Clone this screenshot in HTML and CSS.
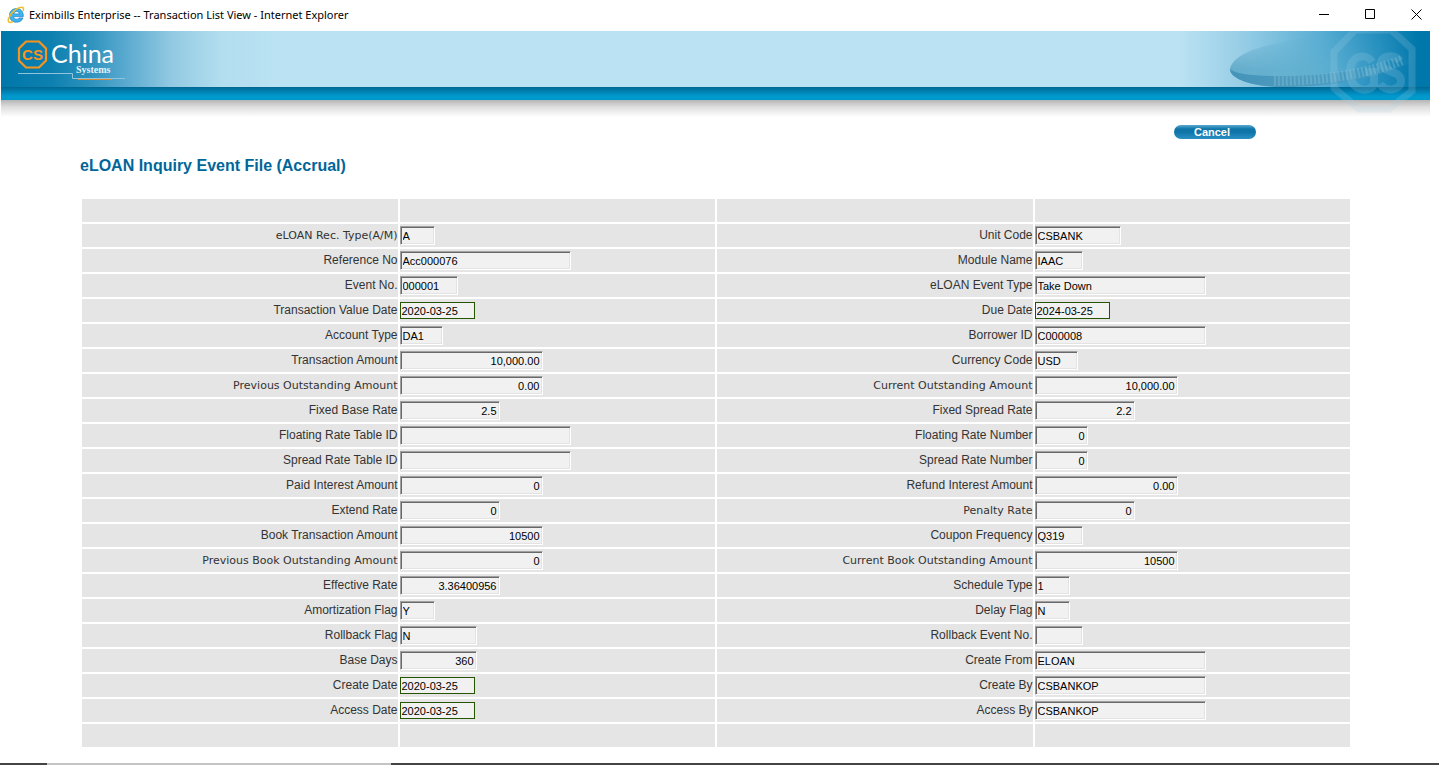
FILE: index.html
```html
<!DOCTYPE html>
<html lang="en">
<head>
<meta charset="utf-8">
<title>Eximbills Enterprise -- Transaction List View</title>
<link rel="stylesheet" href="styles.css">
</head>
<body>
<header class="titlebar">
  <svg class="ie" viewBox="0 0 18 18" aria-hidden="true">
    <path d="M16.300 10.600H6.600c.2 1.700 1.300 2.600 3 2.600 1.200 0 2.100-.5 2.600-1.300h3.800c-.8 2.600-3.400 4.300-6.500 4.300-4.200 0-7-2.800-7-6.800s2.800-6.800 7-6.800 7.100 3 6.800 8zM6.700 7.900h5.600c-.2-1.500-1.200-2.400-2.700-2.400S7 6.400 6.700 7.900z" fill="#3fb4ee" stroke="#1c7fc4" stroke-width=".7"/>
    <path d="M16 4.900c1-2.300.4-3.800-1.300-3.700C10.500 1.300 3 7.200 1.500 12.700c-.9 3.500.8 4.900 4.300 2.800" fill="none" stroke="#f0bd2c" stroke-width="1.500"/>
  </svg>
  <span class="caption">Eximbills Enterprise -- Transaction List View - Internet Explorer</span>
  <div class="controls">
    <button type="button" aria-label="Minimize"><svg viewBox="0 0 11 11"><path d="M0 5.500h10"/></svg></button>
    <button type="button" aria-label="Maximize"><svg viewBox="0 0 11 11"><path d="M.5.500h9v9h-9z"/></svg></button>
    <button type="button" aria-label="Close"><svg viewBox="0 0 11 11"><path d="M.5.500l10 10M10.500.500l-10 10"/></svg></button>
  </div>
</header>
<div class="banner">
  <div class="sky">
    <svg class="logo" viewBox="0 0 140 56" role="img" aria-label="China Systems">
      <path d="M25 10.500h13l7 7v12l-7 7H25l-7-7v-12z" fill="none" stroke="#f7941d" stroke-width="2.200"/>
      <text x="31.500" y="29" text-anchor="middle" class="logo-cs">CS</text>
      <text x="50" y="32" class="logo-china">China</text>
      <text x="75" y="42" class="logo-systems">Systems</text>
      <path d="M17 42.500h54.500v5H124" fill="none" stroke="#8fc4dc"/>
      <path d="M77 48.500h34" stroke="#d98a35"/>
    </svg>
  </div>
  <div class="strip"></div>
  <div class="shade"></div>
  <svg class="art" viewBox="0 0 200 86" aria-hidden="true">
    <defs>
      <linearGradient id="disc" x1="0" y1="0" x2="1" y2="0"><stop offset="0" stop-color="#64acca"/><stop offset=".5" stop-color="#5fb0d0" stop-opacity=".7"/><stop offset="1" stop-color="#3b9bc6" stop-opacity="0"/></linearGradient>
      <linearGradient id="edge" x1="0" y1="0" x2="1" y2="0"><stop offset="0" stop-color="#3688b0" stop-opacity=".7"/><stop offset=".6" stop-color="#3688b0" stop-opacity=".4"/><stop offset="1" stop-color="#3688b0" stop-opacity="0"/></linearGradient>
      <linearGradient id="fade" x1="0" y1="0" x2="0" y2="1"><stop offset="0" stop-color="#000"/><stop offset=".45" stop-color="#fff"/></linearGradient>
      <mask id="top"><rect width="200" height="86" fill="url(#fade)"/></mask>
    </defs>
    <path d="M0 38C2 27 20 17 50 12L100 0h90v27C150 48 100 56 55 56 22 56 0 48 0 38z" fill="url(#disc)" mask="url(#top)"/>
    <path d="M0 38c5 5 22 7 50 7 48 0 95-6 140-25v8C150 48 100 56 55 56 22 56 0 48 0 38z" fill="url(#edge)"/>
    <path d="M44 50C86 50 136 44 172 29" fill="none" stroke="#9ccde0" stroke-opacity=".3" stroke-width="10" stroke-dasharray="2 2"/>
    <g fill="none" stroke="#a9d3e6" stroke-opacity=".2">
      <path d="M125 -1h36l21 19v42l-23 18h-30l-25-21V21z" stroke-width="7"/>
      <path d="M142 31c-5-9-22-8-22 10s17 22 24 13V41h-9" stroke-width="8"/>
      <path d="M170 30c-6-8-20-5-19 3 2 9 20 6 20 17 0 9-15 12-21 3" stroke-width="8"/>
    </g>
  </svg>
</div>
<main>
  <div class="actions"><button type="button" class="cancel">Cancel</button></div>
  <h1>eLOAN Inquiry Event File (Accrual)</h1>
  <table>
    <tr><td></td><td></td><td></td><td></td></tr>
    <tr><td class="ui"><label for="a1">eLOAN Rec. Type(A/M)</label></td><td><input id="a1" class="w35" value="A" readonly></td><td><label for="b1">Unit Code</label></td><td><input id="b1" class="w86" value="CSBANK" readonly></td></tr>
    <tr><td><label for="a2">Reference No</label></td><td><input id="a2" class="w171" value="Acc000076" readonly></td><td><label for="b2">Module Name</label></td><td><input id="b2" class="w48" value="IAAC" readonly></td></tr>
    <tr><td><label for="a3">Event No.</label></td><td><input id="a3" class="w58" value="000001" readonly></td><td><label for="b3">eLOAN Event Type</label></td><td><input id="b3" class="w171" value="Take Down" readonly></td></tr>
    <tr><td><label for="a4">Transaction Value Date</label></td><td><input id="a4" class="date" value="2020-03-25" readonly></td><td><label for="b4">Due Date</label></td><td><input id="b4" class="date" value="2024-03-25" readonly></td></tr>
    <tr><td><label for="a5">Account Type</label></td><td><input id="a5" class="w43" value="DA1" readonly></td><td><label for="b5">Borrower ID</label></td><td><input id="b5" class="w171" value="C000008" readonly></td></tr>
    <tr><td><label for="a6">Transaction Amount</label></td><td><input id="a6" class="w143 num" value="10,000.00" readonly></td><td><label for="b6">Currency Code</label></td><td><input id="b6" class="w43" value="USD" readonly></td></tr>
    <tr><td class="ui"><label for="a7">Previous Outstanding Amount</label></td><td><input id="a7" class="w143 num" value="0.00" readonly></td><td class="ui"><label for="b7">Current Outstanding Amount</label></td><td><input id="b7" class="w143 num" value="10,000.00" readonly></td></tr>
    <tr><td><label for="a8">Fixed Base Rate</label></td><td><input id="a8" class="w100 num" value="2.5" readonly></td><td><label for="b8">Fixed Spread Rate</label></td><td><input id="b8" class="w100 num" value="2.2" readonly></td></tr>
    <tr><td><label for="a9">Floating Rate Table ID</label></td><td><input id="a9" class="w171" value="" readonly></td><td><label for="b9">Floating Rate Number</label></td><td><input id="b9" class="w53 num" value="0" readonly></td></tr>
    <tr><td><label for="a10">Spread Rate Table ID</label></td><td><input id="a10" class="w171" value="" readonly></td><td><label for="b10">Spread Rate Number</label></td><td><input id="b10" class="w53 num" value="0" readonly></td></tr>
    <tr><td><label for="a11">Paid Interest Amount</label></td><td><input id="a11" class="w143 num" value="0" readonly></td><td><label for="b11">Refund Interest Amount</label></td><td><input id="b11" class="w143 num" value="0.00" readonly></td></tr>
    <tr><td><label for="a12">Extend Rate</label></td><td><input id="a12" class="w100 num" value="0" readonly></td><td class="ui"><label for="b12">Penalty Rate</label></td><td><input id="b12" class="w100 num" value="0" readonly></td></tr>
    <tr><td><label for="a13">Book Transaction Amount</label></td><td><input id="a13" class="w143 num" value="10500" readonly></td><td><label for="b13">Coupon Frequency</label></td><td><input id="b13" class="w48" value="Q319" readonly></td></tr>
    <tr><td class="ui"><label for="a14">Previous Book Outstanding Amount</label></td><td><input id="a14" class="w143 num" value="0" readonly></td><td class="ui"><label for="b14">Current Book Outstanding Amount</label></td><td><input id="b14" class="w143 num" value="10500" readonly></td></tr>
    <tr><td><label for="a15">Effective Rate</label></td><td><input id="a15" class="w100 num" value="3.36400956" readonly></td><td><label for="b15">Schedule Type</label></td><td><input id="b15" class="w35" value="1" readonly></td></tr>
    <tr><td><label for="a16">Amortization Flag</label></td><td><input id="a16" class="w35" value="Y" readonly></td><td><label for="b16">Delay Flag</label></td><td><input id="b16" class="w35" value="N" readonly></td></tr>
    <tr><td><label for="a17">Rollback Flag</label></td><td><input id="a17" class="w77" value="N" readonly></td><td><label for="b17">Rollback Event No.</label></td><td><input id="b17" class="w48" value="" readonly></td></tr>
    <tr><td><label for="a18">Base Days</label></td><td><input id="a18" class="w77 num" value="360" readonly></td><td><label for="b18">Create From</label></td><td><input id="b18" class="w171" value="ELOAN" readonly></td></tr>
    <tr><td><label for="a19">Create Date</label></td><td><input id="a19" class="date" value="2020-03-25" readonly></td><td><label for="b19">Create By</label></td><td><input id="b19" class="w171" value="CSBANKOP" readonly></td></tr>
    <tr><td><label for="a20">Access Date</label></td><td><input id="a20" class="date" value="2020-03-25" readonly></td><td><label for="b20">Access By</label></td><td><input id="b20" class="w171" value="CSBANKOP" readonly></td></tr>
    <tr><td></td><td></td><td></td><td></td></tr>
  </table>
</main>
<footer class="window-edge"></footer>
</body>
</html>
```
FILE: styles.css
```css
* { box-sizing: border-box; }
body {
  margin: 0;
  min-height: 100vh;
  display: flex;
  flex-direction: column;
  background: #fff;
  color: #333;
  font: 12px "Liberation Sans", Arial, sans-serif;
}
.titlebar {
  display: flex;
  align-items: center;
  height: 31px;
  padding: 0 17px 2px 7px;
  color: #000;
}
.ie { width: 18px; height: 18px; margin-right: 4px; }
.caption { font: 11px "Noto Sans", "Open Sans", sans-serif; }
.controls { display: flex; gap: 35px; margin-left: auto; }
.controls button { padding: 0; border: 0; background: none; line-height: 0; }
.controls svg { width: 11px; height: 11px; fill: none; stroke: #000; }
.banner { position: relative; margin: 0 9px 0 1px; }
.sky {
  height: 56px;
  background: linear-gradient(90deg, #0077aa 0, #0d80b0 50px, #2990bb 85px, #5aaad0 125px, #92c9e2 170px, #b2deef 220px, #bae2f3 280px, #bae2f3 calc(100% - 250px), #98cee6 calc(100% - 190px), #5aaed4 calc(100% - 110px), #2690bf calc(100% - 55px), #0077aa calc(100% - 12px), #0077aa 100%);
}
.logo { display: block; width: 140px; height: 56px; }
.logo-cs { font: bold 15px "Liberation Sans", Arial, sans-serif; fill: #f7941d; }
.logo-china { font: 25px Lato, sans-serif; fill: #fff; }
.logo-systems { font: bold 10px "Liberation Serif", serif; fill: #e4f2f8; }
.strip { height: 13px; background: linear-gradient(#006790, #0083b5 5px, #0099cc 9px, #0099cc); }
.shade { height: 17px; background: linear-gradient(#b5b5b5, #dedede 7px, #fff); }
.art { position: absolute; top: 0; right: 0; width: 200px; height: 86px; }
main { flex: 1; padding: 8px 87px 14px 80px; }
.actions { display: flex; justify-content: flex-end; padding-right: 96px; }
.cancel {
  width: 82px;
  height: 14px;
  padding: 0 6px 0 0;
  border: 0;
  border-radius: 7px;
  background: linear-gradient(#5aa9d2, #0f75a9 4px, #0f75a9 7px, #2a8fc4);
  color: #fff;
  font: bold 11px/14px "Liberation Sans", Arial, sans-serif;
}
h1 { margin: 17px 0 22px; color: #006699; font-size: 16px; line-height: 19px; }
table { width: 100%; table-layout: fixed; border-spacing: 2px; }
td { height: 23px; padding: 0; background: #e5e5e5; line-height: 0; vertical-align: middle; }
td:nth-child(odd) { padding-bottom: 2px; text-align: right; }
label { line-height: 14px; }
td.ui:nth-child(odd) { padding-bottom: 0; font: 11px "DejaVu Sans", Verdana, sans-serif; line-height: 0; }
input {
  height: 19px;
  padding: 1px 2px 0;
  border: 1px solid;
  border-color: #a0a0a0 #fff #fff #a0a0a0;
  border-radius: 0;
  background: #f1f1f1;
  box-shadow: inset 1px 1px #696969, inset -1px -1px #e3e3e3;
  color: #000;
  font: 11px "Liberation Sans", Arial, sans-serif;
  vertical-align: middle;
  outline: 0;
}
.date { width: 75px; height: 17px; padding: 1px 1px 0; border-color: #265500; box-shadow: none; }
.num { padding-right: 2px; text-align: right; }
.w35 { width: 35px; }
.w43 { width: 43px; }
.w48 { width: 48px; }
.w53 { width: 53px; }
.w58 { width: 58px; }
.w77 { width: 77px; }
.w86 { width: 86px; }
.w100 { width: 100px; }
.w143 { width: 143px; }
.w171 { width: 171px; }
.window-edge {
  height: 2px;
  background: linear-gradient(90deg, #444 47px, #c4c4c4 47px, #c4c4c4 391px, #444 391px);
}
```
